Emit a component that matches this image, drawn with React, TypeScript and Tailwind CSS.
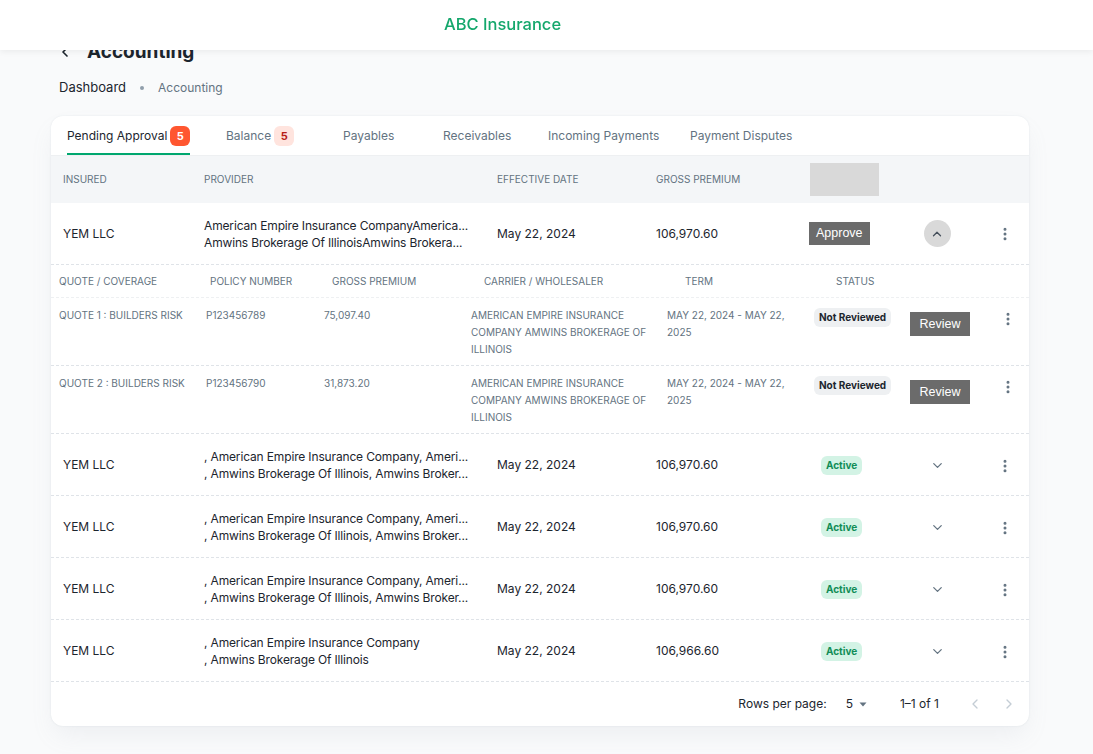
import { ChevronLeft, ChevronRight, ChevronUp, ChevronDown, EllipsisVertical } from "lucide-react";

const font = { fontFamily: "Inter, 'Noto Sans', sans-serif" };

const tabs = [
  { label: "Pending Approval", badge: "solid", w: "w-[159px]" },
  { label: "Balance", badge: "soft", w: "w-[117px]" },
  { label: "Payables", w: "w-[100px]" },
  { label: "Receivables", w: "w-[105px]" },
  { label: "Incoming Payments", w: "w-[142px]" },
  { label: "Payment Disputes", w: "w-auto" },
];

const quotes = [
  { quote: "QUOTE 1 : BUILDERS RISK", policy: "P123456789", premium: "75,097.40" },
  { quote: "QUOTE 2 : BUILDERS RISK", policy: "P123456790", premium: "31,873.20" },
];

// provider text is shown already cut, as the list view does
const rows = [
  {
    p1: ", American Empire Insurance Company, Ameri...",
    p2: ", Amwins Brokerage Of Illinois, Amwins Broker...",
    premium: "106,970.60",
  },
  {
    p1: ", American Empire Insurance Company, Ameri...",
    p2: ", Amwins Brokerage Of Illinois, Amwins Broker...",
    premium: "106,970.60",
  },
  {
    p1: ", American Empire Insurance Company, Ameri...",
    p2: ", Amwins Brokerage Of Illinois, Amwins Broker...",
    premium: "106,970.60",
  },
  {
    p1: ", American Empire Insurance Company",
    p2: ", Amwins Brokerage Of Illinois",
    premium: "106,966.60",
  },
];

const Kebab = () => <EllipsisVertical size={16} strokeWidth={2.5} className="text-[#637381]" />;

const MainRow = ({ p1, p2, premium, children }: any) => (
  <div className="flex items-center h-[62px] border-b border-dashed border-[#dfe3e8] text-[12px] text-[#1c252e]">
    <div className="w-[141px] pl-3">YEM LLC</div>
    <div className="w-[293px] pl-3 leading-[17px] whitespace-nowrap tracking-[-0.15px]">
      <div>{p1}</div>
      <div>{p2}</div>
    </div>
    <div className="w-[159px] pl-3">May 22, 2024</div>
    <div className="w-[154px] pl-3">{premium}</div>
    {children}
  </div>
);

export default function App() {
  return (
    <div className="min-h-screen bg-[#f9fafb]" style={font}>
      {/* top bar */}
      <div className="fixed top-0 inset-x-0 h-[50px] bg-white shadow-[0_2px_6px_rgba(0,0,0,0.06)] z-10 flex items-center pl-[444px]">
        <span className="text-[16.5px] text-[#14a76c] font-medium -mt-[2px]">ABC Insurance</span>
      </div>

      <div className="pt-[38px] pl-[51px] w-[1029px]">
        <div className="flex items-center h-[28px] pl-[6px]">
          <ChevronLeft size={16} strokeWidth={2.5} className="text-[#1c252e]" />
          <h1 className="ml-[14px] text-[19px] font-bold text-[#1c252e]">Accounting</h1>
        </div>
        <div className="flex items-center mt-[12px] h-[20px] pl-2">
          <span className="text-[13px] text-[#1c252e]">Dashboard</span>
          <span className="mx-[14px] w-1 h-1 rounded-full bg-[#919eab]" />
          <span className="text-[12px] text-[#637381]">Accounting</span>
        </div>

        {/* card */}
        <div className="mt-[18px] w-[978px] bg-white rounded-xl shadow-[0_0_2px_rgba(145,158,171,0.2),0_12px_24px_-4px_rgba(145,158,171,0.12)] overflow-hidden">
          {/* tabs */}
          <div className="flex h-[40px] pl-4 border-b border-[#eef0f2] text-[12px]">
            {tabs.map((t, i) => (
              <div key={t.label} className={`${t.w} flex items-stretch`}>
                <div className={`relative flex items-center gap-[3px] pt-[1px] ${i === 0 ? "text-[#1c252e]" : "text-[#637381]"}`}>
                  <span>{t.label}</span>
                  {t.badge === "solid" && (
                    <span className="w-5 h-5 rounded-md bg-[#ff5630] text-white text-[11px] font-bold flex items-center justify-center">5</span>
                  )}
                  {t.badge === "soft" && (
                    <span className="w-5 h-5 rounded-md bg-[#ffe4de] text-[#b71d18] text-[11px] font-bold flex items-center justify-center">5</span>
                  )}
                  {i === 0 && <span className="absolute left-0 right-0 bottom-0 h-[2px] bg-[#00a76f]" />}
                </div>
              </div>
            ))}
          </div>

          {/* table head */}
          <div className="flex items-center h-[47px] bg-[#f4f6f8] text-[10px] text-[#637381] uppercase">
            <div className="w-[141px] pl-3">Insured</div>
            <div className="w-[293px] pl-3">Provider</div>
            <div className="w-[159px] pl-3">Effective Date</div>
            <div className="w-[154px] pl-3">Gross Premium</div>
            <div className="pl-3">
              <div className="w-[69px] h-[33px] bg-[#d9d9d9]" />
            </div>
          </div>

          {/* expanded row */}
          <MainRow
            p1="American Empire Insurance CompanyAmerica..."
            p2="Amwins Brokerage Of IllinoisAmwins Brokera..."
            premium="106,970.60"
          >
            <div className="w-[112px] pl-[11px]">
              <button className="px-[7px] h-[23px] bg-[#6b6b6b] text-white text-[12.5px]" style={{ fontFamily: "'Liberation Sans', Arial, sans-serif" }}>
                Approve
              </button>
            </div>
            <div className="w-[54px] flex justify-center">
              <span className="w-[27px] h-[27px] rounded-full bg-[#d9d9d9] flex items-center justify-center">
                <ChevronUp size={14} strokeWidth={2.2} className="text-[#454f5b]" />
              </span>
            </div>
            <div className="flex-1 flex justify-end pr-4">
              <Kebab />
            </div>
          </MainRow>

          {/* sub table */}
          <div className="flex items-center h-[33px] border-b border-dashed border-[#eef0f2] text-[10px] text-[#637381] uppercase">
            <div className="w-[147px] pl-2">Quote / Coverage</div>
            <div className="w-[118px] pl-3">Policy Number</div>
            <div className="w-[147px] pl-4">Gross Premium</div>
            <div className="w-[196px] pl-[21px]">Carrier / Wholesaler</div>
            <div className="w-[147px] pl-[26px]">Term</div>
            <div className="pl-[30px]">Status</div>
          </div>
          {quotes.map((q) => (
            <div key={q.quote} className="flex items-start h-[68px] pt-[9px] border-b border-dashed border-[#dfe3e8] text-[10px] leading-[17px] text-[#637381] uppercase">
              <div className="w-[147px] pl-2">{q.quote}</div>
              <div className="w-[118px] pl-2">{q.policy}</div>
              <div className="w-[147px] pl-2">{q.premium}</div>
              <div className="w-[196px] pl-2 pr-2">American Empire Insurance Company Amwins Brokerage Of Illinois</div>
              <div className="w-[147px] pl-2 pr-5">May 22, 2024 - May 22, 2025</div>
              <div className="w-[94px] pl-2 pt-[1px]">
                <span className="inline-flex items-center h-[19px] px-[5px] rounded-md bg-[#eef0f2] text-[#1c252e] font-bold normal-case">
                  Not Reviewed
                </span>
              </div>
              <div className="w-[85px] pl-[10px] pt-[5px]">
                <button className="w-[60px] h-[24px] bg-[#6b6b6b] text-white text-[12.5px] normal-case" style={{ fontFamily: "'Liberation Sans', Arial, sans-serif" }}>
                  Review
                </button>
              </div>
              <div className="flex-1 flex justify-end pr-[13px] pt-[4px]">
                <Kebab />
              </div>
            </div>
          ))}

          {rows.map((r, i) => (
            <MainRow key={i} {...r}>
              <div className="w-[112px] pl-[23px] pt-[2px]">
                <span className="inline-flex items-center h-[19px] px-[5px] rounded-md bg-[#d3f3e5] text-[#118d57] text-[10px] font-bold">
                  Active
                </span>
              </div>
              <div className="w-[54px] flex justify-center pt-[2px]">
                <ChevronDown size={15} strokeWidth={2} className="text-[#637381]" />
              </div>
              <div className="flex-1 flex justify-end pr-4 pt-[2px]">
                <Kebab />
              </div>
            </MainRow>
          ))}

          {/* pagination */}
          <div className="flex items-center justify-end h-[44px] pr-[12px] text-[12px] text-[#1c252e]">
            <span>Rows per page:</span>
            <span className="ml-[19px] flex items-center gap-[5px]">
              5
              <svg width="10" height="10" viewBox="0 0 10 10">
                <path d="M1.5 3.5h7L5 7.5z" fill="#637381" />
              </svg>
            </span>
            <span className="ml-[32px]">1–1 of 1</span>
            <span className="ml-[28px] flex items-center gap-[18px] text-[#c4cdd5]">
              <ChevronLeft size={16} />
              <ChevronRight size={16} />
            </span>
          </div>
        </div>
      </div>
    </div>
  );
}
